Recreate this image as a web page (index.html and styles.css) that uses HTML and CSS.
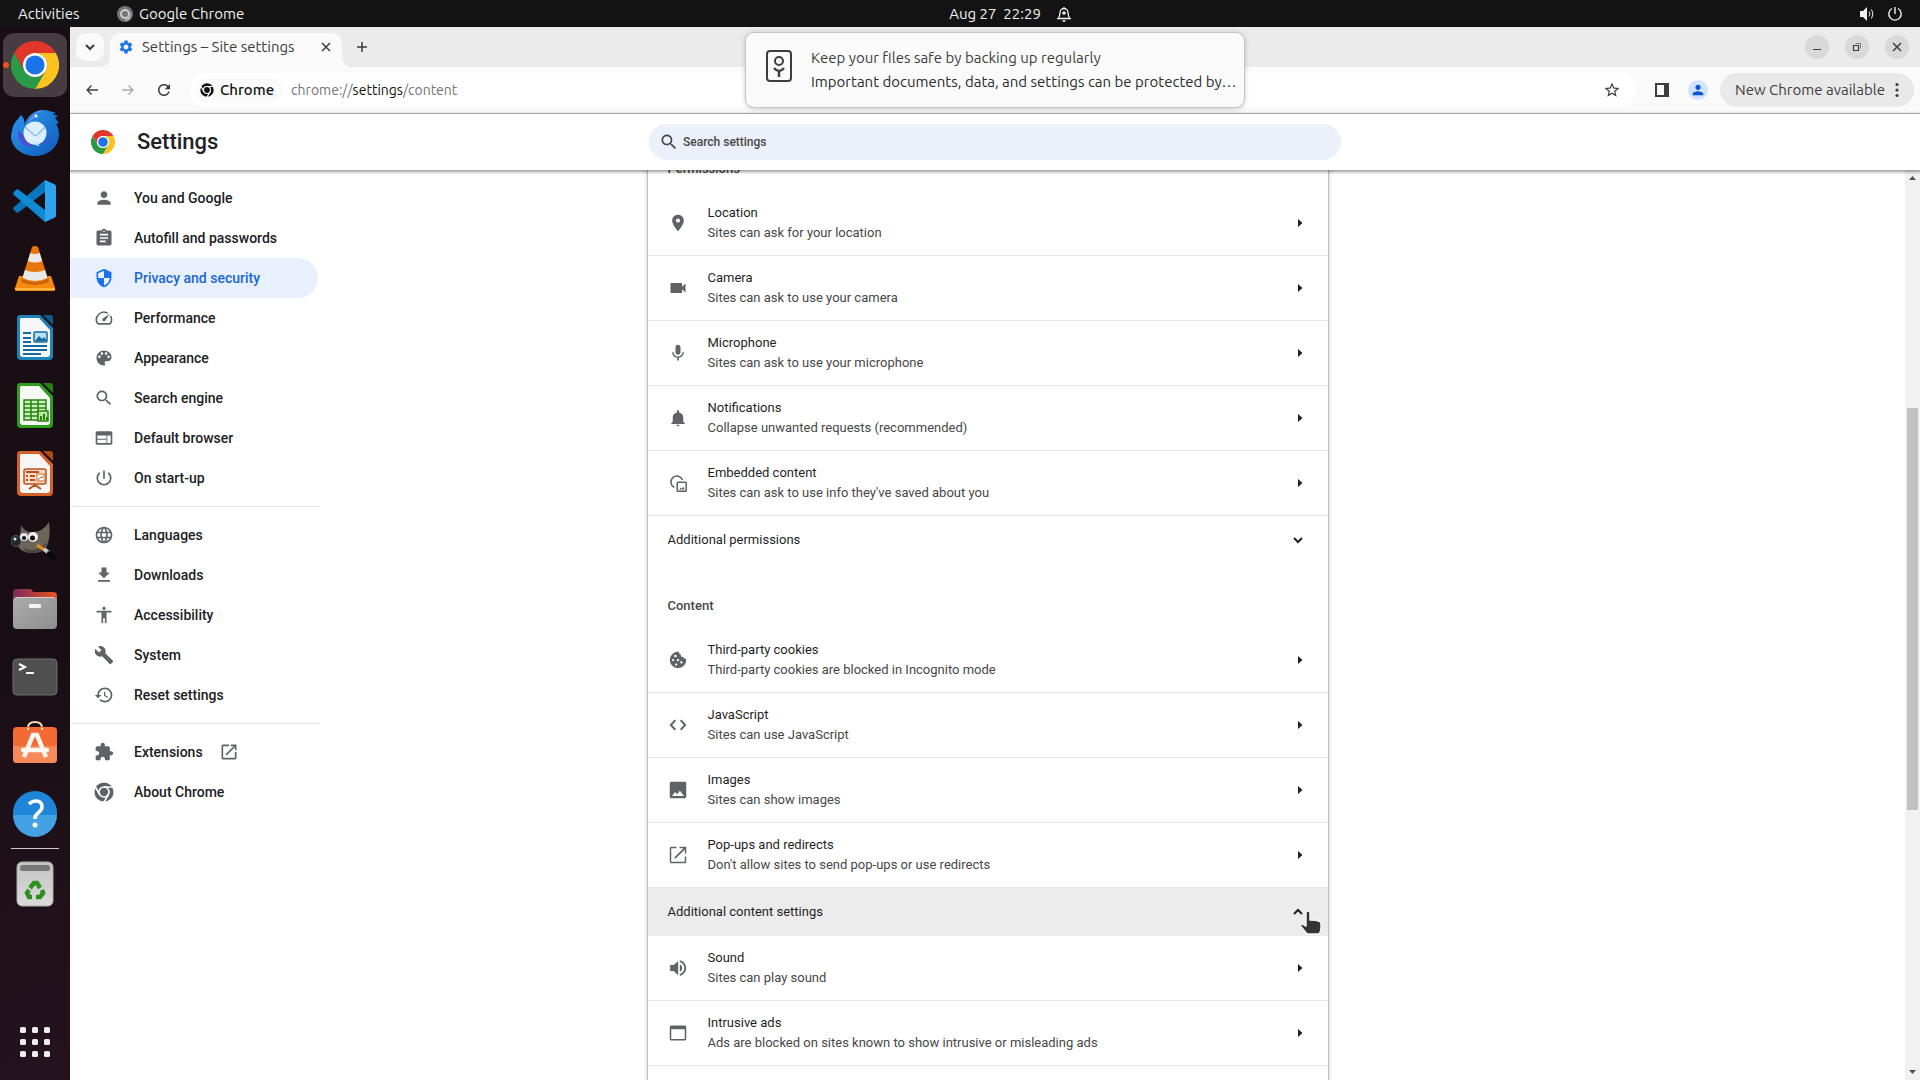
FILE: index.html
```html
<!DOCTYPE html>
<html lang="en-GB">
<head>
<meta charset="utf-8">
<meta name="viewport" content="width=device-width, initial-scale=1">
<title>Settings – Site settings</title>
<link rel="stylesheet" href="styles.css">
</head>
<body>
<svg class="sprite" aria-hidden="true">
  <defs>
    <mask id="chrome-cuts">
      <circle cx="24" cy="24" r="23" fill="#fff"/>
      <g fill="none" stroke="#000" stroke-width="4"><circle cx="24" cy="24" r="12"/><path d="M24 12h24M13.6 30L2 10M34.4 30L23 50"/></g>
    </mask>
    <linearGradient id="g-bird" x1="0" y1="0" x2="1" y2="1"><stop offset="0" stop-color="#2a9bf2"/><stop offset="1" stop-color="#1059b8"/></linearGradient>
    <linearGradient id="g-files" x1="0" y1="0" x2="1" y2="0"><stop offset="0" stop-color="#7b2a5e"/><stop offset="1" stop-color="#e95420"/></linearGradient>
    <linearGradient id="g-grey" x1="0" y1="0" x2="0" y2="1"><stop offset="0" stop-color="#c4c4c4"/><stop offset="1" stop-color="#dadada"/></linearGradient>
    <linearGradient id="g-steel" x1="0" y1="0" x2="1" y2="1"><stop offset="0" stop-color="#acacac"/><stop offset="1" stop-color="#8e8e8e"/></linearGradient>
  </defs>
  <symbol id="chrome" viewBox="0 0 48 48">
    <path fill="#e3362b" d="M3.2 12A24 24 0 0 1 44.8 12H24A12 12 0 0 0 13.6 30z"/>
    <path fill="#fcc31e" d="M44.8 12A24 24 0 0 1 24 48L34.4 30A12 12 0 0 0 24 12z"/>
    <path fill="#2b9a47" d="M3.2 12A24 24 0 0 0 24 48L34.4 30A12 12 0 0 1 13.6 30z"/>
    <circle cx="24" cy="24" r="12" fill="#fff"/><circle cx="24" cy="24" r="9.6" fill="#1a73e8"/>
  </symbol>
  <symbol id="chrome-mono" viewBox="0 0 48 48"><path fill="currentColor" mask="url(#chrome-cuts)" d="M0 0h48v48H0z"/></symbol>
  <symbol id="person" viewBox="0 0 24 24"><path d="M12 12c2.21 0 4-1.79 4-4s-1.79-4-4-4-4 1.79-4 4 1.79 4 4 4zm0 2c-2.67 0-8 1.34-8 4v2h16v-2c0-2.66-5.33-4-8-4z"/></symbol>
  <symbol id="assignment" viewBox="0 0 24 24"><path d="M19 3h-4.18C14.4 1.84 13.3 1 12 1c-1.3 0-2.4.84-2.82 2H5c-1.1 0-2 .9-2 2v14c0 1.1.9 2 2 2h14c1.1 0 2-.9 2-2V5c0-1.1-.9-2-2-2zm-7 0c.55 0 1 .45 1 1s-.45 1-1 1-1-.45-1-1 .45-1 1-1zm2 14H7v-2h7v2zm3-4H7v-2h10v2zm0-4H7V7h10v2z"/></symbol>
  <symbol id="security" viewBox="0 0 24 24"><path d="M12 1L3 5v6c0 5.55 3.84 10.74 9 12 5.16-1.26 9-6.45 9-12V5l-9-4zm0 10.99h7c-.53 4.12-3.28 7.79-7 8.94V12H5V6.3l7-3.11v8.8z"/></symbol>
  <symbol id="speed" viewBox="0 0 24 24"><path d="M20.38 8.57l-1.23 1.85a8 8 0 0 1-.22 7.58H5.07A8 8 0 0 1 15.58 6.85l1.85-1.23A10 10 0 0 0 3.35 19a2 2 0 0 0 1.72 1h13.85a2 2 0 0 0 1.74-1 10 10 0 0 0-.27-10.44zM10.59 15.41a2 2 0 0 0 2.83 0l5.66-8.49-8.49 5.66a2 2 0 0 0 0 2.83z"/></symbol>
  <symbol id="palette" viewBox="0 0 24 24"><path d="M12 3c-4.97 0-9 4.03-9 9s4.03 9 9 9c.83 0 1.5-.67 1.5-1.5 0-.39-.15-.74-.39-1.01-.23-.26-.38-.61-.38-.99 0-.83.67-1.5 1.5-1.5H16c2.76 0 5-2.24 5-5 0-4.42-4.03-8-9-8zm-5.5 9c-.83 0-1.500-.67-1.500-1.500S5.670 9 6.500 9 8 9.670 8 10.500 7.330 12 6.500 12zm3-4C8.670 8 8 7.330 8 6.500S8.670 5 9.500 5s1.500.670 1.500 1.500S10.330 8 9.500 8zm5 0c-.83 0-1.500-.67-1.500-1.500S13.670 5 14.500 5s1.500.670 1.500 1.500S15.330 8 14.500 8zm3 4c-.83 0-1.500-.67-1.500-1.500S16.670 9 17.500 9s1.500.670 1.500 1.500-.67 1.500-1.500 1.500z"/></symbol>
  <symbol id="search" viewBox="0 0 24 24"><path d="M15.5 14h-.79l-.28-.27C15.41 12.59 16 11.11 16 9.5 16 5.91 13.09 3 9.5 3S3 5.91 3 9.5 5.91 16 9.5 16c1.61 0 3.09-.59 4.23-1.57l.27.28v.79l5 4.99L20.49 19l-4.99-5zm-6 0C7.01 14 5 11.99 5 9.5S7.01 5 9.5 5 14 7.01 14 9.5 11.99 14 9.5 14z"/></symbol>
  <symbol id="web" viewBox="0 0 24 24"><path d="M20 4H4c-1.1 0-1.99.9-1.99 2L2 18c0 1.1.9 2 2 2h16c1.100 0 2-.9 2-2V6c0-1.100-.9-2-2-2zm-5 14H4v-4h11v4zm0-5H4V9h11v4zm5 5h-4V9h4v9z"/></symbol>
  <symbol id="power" viewBox="0 0 24 24"><path d="M13 3h-2v10h2V3zm4.83 2.17l-1.42 1.42C17.99 7.86 19 9.81 19 12c0 3.87-3.13 7-7 7s-7-3.13-7-7c0-2.19 1.01-4.14 2.58-5.42L6.17 5.17C4.23 6.82 3 9.26 3 12c0 4.97 4.03 9 9 9s9-4.03 9-9c0-2.74-1.23-5.18-3.17-6.83z"/></symbol>
  <symbol id="globe" viewBox="0 0 24 24"><path d="M11.99 2C6.47 2 2 6.48 2 12s4.47 10 9.99 10C17.52 22 22 17.52 22 12S17.52 2 11.99 2zm6.93 6h-2.95c-.32-1.25-.78-2.45-1.38-3.56 1.84.63 3.37 1.91 4.33 3.56zM12 4.04c.83 1.2 1.48 2.53 1.91 3.96h-3.82c.43-1.43 1.08-2.76 1.91-3.96zM4.26 14C4.1 13.36 4 12.69 4 12s.1-1.36.26-2h3.38c-.08.66-.14 1.32-.14 2 0 .68.06 1.34.14 2H4.26zm.82 2h2.95c.32 1.25.78 2.45 1.38 3.56-1.84-.63-3.37-1.9-4.33-3.56zm2.95-8H5.08c.96-1.66 2.49-2.93 4.33-3.56C8.81 5.55 8.35 6.75 8.03 8zM12 19.96c-.83-1.2-1.48-2.53-1.91-3.96h3.82c-.43 1.43-1.08 2.76-1.91 3.96zM14.34 14H9.66c-.09-.66-.16-1.32-.16-2 0-.68.07-1.35.16-2h4.68c.09.65.16 1.32.16 2 0 .68-.07 1.34-.16 2zm.25 5.56c.6-1.11 1.06-2.31 1.38-3.56h2.95c-.96 1.65-2.49 2.93-4.33 3.56zM16.36 14c.08-.66.14-1.32.14-2 0-.68-.06-1.34-.14-2h3.38c.16.64.26 1.31.26 2s-.1 1.36-.26 2h-3.38z"/></symbol>
  <symbol id="download" viewBox="0 0 24 24"><path d="M19 9h-4V3H9v6H5l7 7 7-7zM5 18v2h14v-2H5z"/></symbol>
  <symbol id="accessibility" viewBox="0 0 24 24"><path d="M12 2c1.1 0 2 .9 2 2s-.9 2-2 2-2-.9-2-2 .9-2 2-2zm9 7h-6v13h-2v-6h-2v6H9V9H3V7h18v2z"/></symbol>
  <symbol id="wrench" viewBox="0 0 24 24"><path d="M22.7 19l-9.1-9.1c.9-2.3.4-5-1.5-6.9-2-2-5-2.4-7.4-1.3L9 6 6 9 1.6 4.7C.4 7.1.9 10.1 2.9 12.1c1.9 1.9 4.6 2.4 6.9 1.5l9.1 9.1c.4.4 1 .4 1.4 0l2.3-2.3c.5-.4.5-1.1.1-1.4z"/></symbol>
  <symbol id="restore" viewBox="0 0 24 24"><path d="M13 3c-4.97 0-9 4.03-9 9H1l3.89 3.89.07.14L9 12H6c0-3.87 3.13-7 7-7s7 3.13 7 7-3.13 7-7 7c-1.93 0-3.68-.79-4.94-2.06l-1.42 1.42C8.27 19.99 10.51 21 13 21c4.97 0 9-4.03 9-9s-4.03-9-9-9zm-1 5v5l4.28 2.54.72-1.21-3.5-2.08V8H12z"/></symbol>
  <symbol id="extension" viewBox="0 0 24 24"><path d="M20.5 11H19V7c0-1.1-.9-2-2-2h-4V3.5C13 2.12 11.88 1 10.5 1S8 2.12 8 3.5V5H4c-1.1 0-1.99.9-1.99 2v3.8H3.5c1.49 0 2.7 1.21 2.7 2.7s-1.21 2.7-2.7 2.7H2V20c0 1.1.9 2 2 2h3.8v-1.5c0-1.49 1.21-2.7 2.7-2.7 1.49 0 2.7 1.21 2.7 2.7V22H17c1.1 0 2-.9 2-2v-4h1.5c1.38 0 2.5-1.12 2.5-2.5S21.88 11 20.5 11z"/></symbol>
  <symbol id="launch" viewBox="0 0 24 24"><path d="M19 19H5V5h7V3H5c-1.11 0-2 .9-2 2v14c0 1.1.89 2 2 2h14c1.1 0 2-.9 2-2v-7h-2v7zM14 3v2h3.59l-9.83 9.83 1.41 1.41L19 6.41V10h2V3h-7z"/></symbol>
  <symbol id="place" viewBox="0 0 24 24"><path d="M12 2C8.13 2 5 5.13 5 9c0 5.25 7 13 7 13s7-7.75 7-13c0-3.87-3.13-7-7-7zm0 9.5c-1.38 0-2.5-1.12-2.5-2.5s1.12-2.5 2.5-2.5 2.5 1.12 2.5 2.5-1.12 2.5-2.5 2.5z"/></symbol>
  <symbol id="videocam" viewBox="0 0 24 24"><path d="M17 10.5V7c0-.55-.45-1-1-1H4c-.55 0-1 .45-1 1v10c0 .55.45 1 1 1h12c.55 0 1-.45 1-1v-3.5l4 4v-11l-4 4z"/></symbol>
  <symbol id="mic" viewBox="0 0 24 24"><path d="M12 14c1.66 0 2.99-1.34 2.99-3L15 5c0-1.66-1.34-3-3-3S9 3.34 9 5v6c0 1.66 1.34 3 3 3zm5.3-3c0 3-2.54 5.1-5.3 5.1S6.7 14 6.7 11H5c0 3.41 2.72 6.23 6 6.72V21h2v-3.28c3.28-.48 6-3.3 6-6.72h-1.7z"/></symbol>
  <symbol id="bell" viewBox="0 0 24 24"><path d="M12 23c1.100 0 2-.9 2-2h-4c0 1.100.890 2 2 2zm7-6v-6c0-3.070-2.140-5.640-5.500-6.320V3c0-.83-.67-1.500-1.500-1.500s-1.500.670-1.500 1.500v1.680C7.130 5.360 5 7.920 5 11v6l-2 2v1h18v-1l-2-2z"/></symbol>
  <symbol id="embedded" viewBox="0 0 24 24"><g fill="none" stroke="currentColor" stroke-width="2"><path d="M7 18A8 8 0 1 1 18 8"/><rect x="11" y="11" width="12" height="12" rx="1"/></g><path d="M13.500 20.500l2-2.500 1.500 1.500 2-2.500 2 3.500z"/></symbol>
  <symbol id="cookie" viewBox="0 0 24 24"><path fill-rule="evenodd" d="M12 1A11 11 0 1 0 23 12c0-.8-.1-1.300-.2-1.800-1.500.3-3.500-.5-3.800-2.200-2.500 0-3.800-1.800-3.300-3.500-1.700-.2-2.700-1.800-2.500-3.500zM8.500 5a1.700 1.700 0 1 1 0 3.400 1.700 1.700 0 0 1 0-3.400zM5.500 10.500a1.500 1.500 0 1 1 0 3 1.500 1.500 0 0 1 0-3zM12 10.500a1.600 1.600 0 1 1 0 3.200 1.600 1.600 0 0 1 0-3.200zM9.500 16.500a1.500 1.500 0 1 1 0 3 1.500 1.500 0 0 1 0-3zM16.500 13.500a1.600 1.600 0 1 1 0 3.200 1.600 1.600 0 0 1 0-3.200z"/></symbol>
  <symbol id="code" viewBox="0 0 24 24"><path fill="none" stroke="currentColor" stroke-width="2.600" d="M8.500 5.500L2.500 12l6 6.500M15.500 5.500l6 6.500-6 6.500"/></symbol>
  <symbol id="image" viewBox="0 0 24 24"><path d="M23 21V3c0-1.100-.9-2-2-2H3C1.900 1 1 1.900 1 3v18c0 1.100.9 2 2 2h18c1.100 0 2-.9 2-2zM8 14.500l3 3 3.500-4.500 5.500 7H4z"/></symbol>
  <symbol id="volume" viewBox="0 0 24 24"><path d="M1.500 8v8h4.800l6 5.500v-19L6.300 8H1.500zm16 4c0-2.100-1-3.900-3-4.800v9.600c2-.9 3-2.700 3-4.800zM14.500 1.500V4c3.400 1 6 4.200 6 8s-2.600 7-6 8v2.500c4.800-1.100 8.400-5.400 8.400-10.500S19.300 2.600 14.500 1.500z"/></symbol>
  <symbol id="window" viewBox="0 0 24 24"><path fill-rule="evenodd" d="M3 2h18a2 2 0 0 1 2 2v16a2 2 0 0 1-2 2H3a2 2 0 0 1-2-2V4a2 2 0 0 1 2-2zm0 5v13h18V7z"/></symbol>
  <symbol id="launch-row" viewBox="0 0 24 24"><path d="M21 21H3V3h7V1H3C1.900 1 1 1.900 1 3v18c0 1.100.9 2 2 2h18c1.100 0 2-.9 2-2v-7h-2v7zM14 1v2h5.300L7 15.300 8.700 17 21 4.700V10h2V1h-9z"/></symbol>
  <symbol id="gear" viewBox="0 0 24 24"><path d="M19.14 12.94c.04-.3.06-.61.06-.94 0-.32-.02-.64-.07-.94l2.03-1.58c.18-.14.23-.41.12-.61l-1.92-3.32c-.12-.22-.37-.29-.59-.22l-2.39.96c-.5-.38-1.03-.7-1.62-.94l-.36-2.54c-.04-.24-.24-.41-.48-.41h-3.84c-.24 0-.43.17-.47.41l-.36 2.54c-.59.24-1.13.57-1.62.94l-2.39-.96c-.22-.08-.47 0-.59.22L2.74 8.87c-.12.21-.08.47.12.61l2.03 1.58c-.05.3-.09.63-.09.94s.02.64.07.94l-2.03 1.58c-.18.14-.23.41-.12.61l1.92 3.32c.12.22.37.29.59.22l2.39-.96c.5.38 1.03.7 1.62.94l.36 2.54c.05.24.24.41.48.41h3.84c.24 0 .44-.17.47-.41l.36-2.54c.59-.24 1.13-.56 1.62-.94l2.39.96c.22.08.47 0 .59-.22l1.92-3.32c.12-.22.07-.47-.12-.61l-2.01-1.58zM12 15.6c-1.98 0-3.6-1.62-3.6-3.6s1.62-3.6 3.6-3.6 3.6 1.62 3.6 3.6-1.62 3.6-3.6 3.6z"/></symbol>
  <symbol id="star" viewBox="0 0 24 24"><path d="M22 9.24l-7.19-.62L12 2 9.19 8.63 2 9.24l5.46 4.73L5.82 21 12 17.27 18.18 21l-1.63-7.03L22 9.24zM12 15.4l-3.76 2.27 1-4.28-3.32-2.88 4.38-.38L12 6.1l1.71 4.04 4.38.38-3.32 2.88 1 4.28L12 15.4z"/></symbol>
  <symbol id="back" viewBox="0 0 24 24"><path d="M22 10.800H6.500l5.500-5.500L10.300 3.600 2 12l8.300 8.400 1.700-1.700-5.500-5.500H22z"/></symbol>
  <symbol id="forward" viewBox="0 0 24 24"><path d="M2 10.800h15.500L12 5.300l1.700-1.700L22 12l-8.300 8.400-1.700-1.700 5.500-5.500H2z"/></symbol>
  <symbol id="reload" viewBox="0 0 24 24"><path d="M17.65 6.35C16.2 4.9 14.21 4 12 4c-4.42 0-7.99 3.58-7.99 8s3.57 8 7.99 8c3.73 0 6.84-2.55 7.73-6h-2.08c-.82 2.33-3.04 4-5.65 4-3.31 0-6-2.69-6-6s2.69-6 6-6c1.66 0 3.14.69 4.22 1.780L13 11h7V4l-2.350 2.350z"/></symbol>
  <symbol id="cross" viewBox="0 0 12 12"><path fill="none" stroke="currentColor" stroke-width="1.500" d="M2 2l8 8M10 2l-8 8"/></symbol>
  <symbol id="chev-down" viewBox="0 0 20 20"><path fill="none" stroke="currentColor" stroke-width="2" d="M6 8l4 4 4-4"/></symbol>
  <symbol id="chev-up" viewBox="0 0 20 20"><path fill="none" stroke="currentColor" stroke-width="2" d="M6 12l4-4 4 4"/></symbol>
  <symbol id="caret" viewBox="0 0 16 16"><path d="M6 4l4.500 4L6 12z"/></symbol>
</svg>

<header class="topbar">
  <button class="topbar-activities">Activities</button>
  <button class="topbar-app"><svg class="i16" aria-hidden="true"><circle cx="8" cy="8" r="8" fill="#757575"/><circle cx="8" cy="8" r="5" fill="#cfcfcf"/><path d="M10 11.500l-2 4.300 5-3 1-6z" fill="#b5b5b5"/><circle cx="8" cy="8" r="3" fill="#757575"/></svg>Google Chrome</button>
  <button class="topbar-clock"><span>Aug 27&nbsp; 22:29</span><svg class="i16" viewBox="0 0 16 16" fill="none" stroke="#f2f2f2" stroke-width="1.300" aria-hidden="true"><path d="M2 12.500c1.500-1.500 2-2.500 2-6a4 4 0 0 1 8 0c0 3.500.5 4.500 2 6zM8 2.500V1M6.500 15h3"/><path d="M8 5v4M6 7h4"/></svg></button>
  <button class="topbar-system" aria-label="System menu">
    <svg class="i16" viewBox="0 0 16 16" aria-hidden="true"><path fill="#f2f2f2" d="M1 5h3l4-4v14l-4-4H1z"/><path fill="none" stroke="#f2f2f2" d="M10 5.500q2 2.500 0 5M12.500 3.500q3 4.500 0 9"/></svg>
    <svg class="i16" viewBox="0 0 16 16" fill="none" stroke="#f2f2f2" stroke-width="1.400" aria-hidden="true"><path d="M8 1v7M5 2.500a6.200 6.200 0 1 0 6 0"/></svg>
  </button>
</header>

<div class="desktop">
  <nav class="dock" aria-label="Dock">
    <a href="#" class="dock-item dock-active" aria-label="Google Chrome"><svg><use href="#chrome"/></svg></a>
    <a href="#" class="dock-item" aria-label="Thunderbird"><svg viewBox="0 0 48 48">
      <path fill="url(#g-bird)" d="M1 22C2 14 6 12 10 6c4 4 4 8 3 11C16 8 22 1 32 1c5 0 9 2 13 3-2 1-3 1-4 1l6 2-3 2 4 5-3 1c2 3 3 6 3 10 0 13-11 22-24 22S0 38 0 27l1-5z"/>
      <path fill="#2486e6" d="M2 20C5 17 8 13 10 7c3 5 3 8 1 13-3 6-1 12 5 17C6 35 1 28 2 20z"/>
      <path fill="#9a86ea" d="M16 14l6-7c4-5 7-6 9-5-5 1-8 4-9 8z"/>
      <circle cx="25" cy="7" r="1.600" fill="#e8f6ff"/>
      <path fill="#4c4fd0" d="M8 21c-3 8 1 15 10 17l6-3-9-5zM37 28c0 4-4 6-8 6 3 1 7 1 9-2z"/>
      <circle cx="24" cy="24" r="11.500" fill="#dceffc"/><path d="M20 33q5 4 9 4-3-2-2-5z" fill="#cfe9fb"/>
      <path fill="none" stroke="#8fbbe6" stroke-width="1.500" d="M14 18l9 8q1.500 1 3 0l8-8"/></svg></a>
    <a href="#" class="dock-item" aria-label="Visual Studio Code"><svg viewBox="0 0 48 48">
      <path fill="#0a75bb" d="M3 30l31-27v12L8 35c-1 1-2 1-3 0l-2-2c-1-1-1-2 0-3z"/>
      <path fill="#0f8ad4" d="M3 18l31 27V33L8 13c-1-1-2-1-3 0l-2 2c-1 1-1 2 0 3z"/>
      <path fill="#2fa2f0" d="M34 3l9 4c1.500 1 2 1 2 3v28c0 2-.5 2-2 3l-9 4z"/></svg></a>
    <a href="#" class="dock-item" aria-label="VLC"><svg viewBox="0 0 48 48">
      <path fill="#f58a0e" d="M8 31h32l4 12q1 3-2 3H6q-3 0-2-3z"/><path fill="#c9600a" d="M10 37q14 6 28 0l-1-6H11z"/><path fill="#ffb545" d="M4 43h40v2H4z"/>
      <path fill="#e8760a" d="M21 2q3-2 6 0l10 32q-13 7-26 0z"/>
      <path fill="#e8e8e8" d="M19.300 8q4.700 2 9.400 0l2.500 8q-7.200 3-14.400 0zM14 25q10 4 20 0l2.500 8q-12.500 6-25 0z"/></svg></a>
    <a href="#" class="dock-item" aria-label="LibreOffice Writer"><svg viewBox="0 0 48 48">
      <path fill="#1d83b8" d="M9 2h20l13 13v28q0 4-4 4H10q-4 0-4-4V6q0-4 3-4z"/><path fill="#f5f7f8" d="M10 5h18l11 12v24q0 3-3 3H12q-3 0-3-3V6z"/><path fill="#0e5c88" d="M32 2h7q3 0 3 3v7z"/>
      <path stroke="#13699b" stroke-width="2" d="M12 20h8M12 25h8M12 29h8M12 33h24M12 37h24M12 41h18"/><rect x="23" y="19" width="13" height="10" rx="1" fill="#b7e1f5" stroke="#13699b" stroke-width="1.500"/><path fill="#13699b" d="M24 28l4-5 3 3 2-2 3 4z"/></svg></a>
    <a href="#" class="dock-item" aria-label="LibreOffice Calc"><svg viewBox="0 0 48 48">
      <path fill="#2e9e1b" d="M9 2h20l13 13v28q0 4-4 4H10q-4 0-4-4V6q0-4 3-4z"/><path fill="#f6f8f5" d="M10 5h18l11 12v24q0 3-3 3H12q-3 0-3-3V6z"/><path fill="#28810f" d="M32 2h7q3 0 3 3v7z"/>
      <path fill="#c9f0b8" stroke="#28810f" stroke-width="1.500" d="M13 19h22v20H13zM13 23h22M13 27h22M13 31h22M13 35h22M20 19v20M27 19v20"/><rect x="27" y="30" width="10" height="10" fill="#b6e89f" stroke="#28810f" stroke-width="1.500"/><path stroke="#28810f" stroke-width="2" d="M30 39v-4M33 39v-6M36 39v-3"/></svg></a>
    <a href="#" class="dock-item" aria-label="LibreOffice Impress"><svg viewBox="0 0 48 48">
      <path fill="#d4602a" d="M9 2h20l13 13v28q0 4-4 4H10q-4 0-4-4V6q0-4 3-4z"/><path fill="#f8f6f4" d="M10 5h18l11 12v24q0 3-3 3H12q-3 0-3-3V6z"/><path fill="#b34812" d="M32 2h7q3 0 3 3v7z"/>
      <rect x="13" y="20" width="22" height="15" rx="2" fill="#f8dcc8" stroke="#b9501b" stroke-width="1.500"/><path fill="none" stroke="#b9501b" stroke-width="2" d="M15 23h13M15 27h2M15 31h2M19 27h5M19 31h5M24 35v3M18 40l6-4 6 4"/><rect x="26" y="25" width="8" height="7" fill="#fff" stroke="#d4602a"/><path fill="none" stroke="#d4602a" d="M27 31l3-3 1 1 2-3"/></svg></a>
    <a href="#" class="dock-item" aria-label="GIMP"><svg viewBox="0 0 48 48">
      <path fill="#6b6559" d="M10 8q4 8 12 7 10 0 16-10 2 14-2 24-4 7-14 7-14 0-16-10 4-8 4-18z"/><path fill="#4a463e" d="M12 31q14 6 24-6-2 11-14 11-8 0-10-5z"/>
      <ellipse cx="5" cy="24" rx="5" ry="5.500" fill="#20262a" stroke="#4d5a63"/><circle cx="4" cy="22" r="1.500" fill="#dfe8ee"/>
      <circle cx="13" cy="20" r="4" fill="#e6e6e6"/><circle cx="22" cy="20" r="5" fill="#f0f0f0"/><circle cx="13" cy="21" r="2" fill="#111"/><circle cx="21.500" cy="21" r="2.500" fill="#111"/>
      <path d="M26 28l9 6" stroke="#f08a1d" stroke-width="3"/><path d="M33 32l5 4" stroke="#c8ccd0" stroke-width="4"/><path fill="#090909" d="M37 34q6 0 10 10-9-1-12-6z"/></svg></a>
    <a href="#" class="dock-item" aria-label="Files"><svg viewBox="0 0 48 48">
      <path fill="url(#g-files)" d="M2 8q0-4 4-4h12q3 0 4 3h20q4 0 4 4v12H2z"/><rect x="2" y="12" width="44" height="32" rx="4" fill="url(#g-steel)"/><path d="M5 12.500h38" stroke="#d0d0d0"/><rect x="18" y="19" width="12" height="4" rx="1" fill="#f2f2f2"/></svg></a>
    <a href="#" class="dock-item" aria-label="Terminal"><svg viewBox="0 0 48 48">
      <rect x="2" y="6" width="44" height="36" rx="4" fill="#4f4f4f" stroke="#6e6e6e"/><path fill="none" stroke="#fff" stroke-width="2" d="M8 11l6 3-6 3M15 20h8"/></svg></a>
    <a href="#" class="dock-item" aria-label="Ubuntu Software"><svg viewBox="0 0 48 48">
      <path fill="none" stroke="#f9dcae" stroke-width="2" d="M17 10V7q0-6 7-6t7 6v3"/><rect x="2" y="6" width="44" height="36" rx="4" fill="#f26b35"/><path fill="#f78a5a" d="M2 25h44v13q0 4-4 4H6q-4 0-4-4z"/>
      <path fill="none" stroke="#f9dcae" stroke-width="2" d="M17 9V7M31 9V7"/><path fill="none" stroke="#fff6ef" stroke-width="4.500" d="M13 36l9-22h4l9 22"/><path stroke="#fff6ef" stroke-width="4.500" stroke-linecap="round" d="M12 29h24"/></svg></a>
    <a href="#" class="dock-item" aria-label="Help"><svg viewBox="0 0 48 48">
      <circle cx="24" cy="24" r="22" fill="#1f85d8"/><path fill="#43a1e4" d="M2 26h44a22 22 0 0 1-44 0z"/><path fill="none" stroke="#fff" stroke-width="3.500" d="M18 15q3-3 7-3 6 0 6 6 0 3-4 6-3 2-3 6"/><circle cx="24" cy="36" r="2.500" fill="#fff"/></svg></a>
    <hr class="dock-rule">
    <a href="#" class="dock-item" aria-label="Rubbish bin"><svg viewBox="0 0 48 48">
      <rect x="6" y="2" width="36" height="44" rx="5" fill="url(#g-grey)" stroke="#aaa"/><rect x="9" y="5" width="30" height="6" rx="2.500" fill="#777"/>
      <g fill="none" stroke="#2d8f1e" stroke-width="4.500"><path d="M19 28l4-5h3l3 5"/><path d="M31 30l1 3-3 4h-4"/><path d="M21 37h-3l-2-4 2-3"/></g></svg></a>
    <a href="#" class="dock-item dock-apps" aria-label="Show applications"><svg viewBox="0 0 48 48" fill="#eee">
      <g id="dots"><rect x="9" y="9" width="6" height="6" rx="1.500"/><rect x="21" y="9" width="6" height="6" rx="1.500"/><rect x="33" y="9" width="6" height="6" rx="1.500"/></g><use href="#dots" y="12"/><use href="#dots" y="24"/></svg></a>
  </nav>

  <div class="browser">
    <div class="tabstrip">
      <button class="tab-search" aria-label="Search tabs"><svg class="i20"><use href="#chev-down"/></svg></button>
      <div class="tab">
        <svg class="i16 tab-icon"><use href="#gear"/></svg>
        <span class="tab-title">Settings – Site settings</span>
        <button class="tab-close" aria-label="Close tab"><svg class="i12"><use href="#cross"/></svg></button>
      </div>
      <button class="tab-new" aria-label="New tab"><svg viewBox="0 0 12 12" class="i12"><path d="M6 1v10M1 6h10" stroke="currentColor" stroke-width="1.500"/></svg></button>
      <div class="win-controls">
        <button aria-label="Minimise"><svg class="i12" viewBox="0 0 12 12"><path d="M2 8.500h8" stroke="currentColor"/></svg></button>
        <button aria-label="Restore"><svg class="i12" viewBox="0 0 12 12" fill="none" stroke="currentColor"><path stroke-width="1.200" d="M2.500 4.500h5v5h-5z"/><path opacity=".6" d="M4.500 2.500h5v5"/></svg></button>
        <button aria-label="Close"><svg class="i12" viewBox="0 0 12 12"><path d="M2 2l8 8M10 2l-8 8" stroke="currentColor" stroke-width="1.500"/></svg></button>
      </div>
    </div>

    <div class="toolbar">
      <button class="tool" aria-label="Back"><svg class="i14"><use href="#back"/></svg></button>
      <button class="tool" aria-label="Forward" disabled><svg class="i14"><use href="#forward"/></svg></button>
      <button class="tool" aria-label="Reload"><svg class="i18"><use href="#reload"/></svg></button>
      <div class="omnibox">
        <span class="chip"><svg class="i14"><use href="#chrome-mono"/></svg>Chrome</span>
        <span class="url">chrome://<b>settings</b>/content</span>
        <button class="tool star" aria-label="Bookmark this tab"><svg class="i18"><use href="#star"/></svg></button>
      </div>
      <button class="tool" aria-label="Side panel"><svg class="i16" viewBox="0 0 16 16"><path fill="none" stroke="currentColor" stroke-width="2" d="M2 2h12v12H2z"/><path d="M10 2h4v12h-4z"/></svg></button>
      <button class="tool avatar" aria-label="Profile"><svg class="i18"><use href="#person"/></svg></button>
      <button class="update">New Chrome available<svg class="i16" viewBox="0 0 16 16"><circle cx="8" cy="2.500" r="1.600"/><circle cx="8" cy="8" r="1.600"/><circle cx="8" cy="13.500" r="1.600"/></svg></button>
    </div>

    <header class="page-head">
      <div class="brand"><svg class="i24"><use href="#chrome"/></svg><h1>Settings</h1></div>
      <label class="search"><svg class="i20"><use href="#search"/></svg><input type="text" placeholder="Search settings" aria-label="Search settings"></label>
    </header>

    <div class="page">
      <div class="columns">
        <nav class="menu" aria-label="Settings">
          <a href="#"><svg class="i20"><use href="#person"/></svg>You and Google</a>
          <a href="#"><svg class="i20"><use href="#assignment"/></svg>Autofill and passwords</a>
          <a href="#" class="current" aria-current="page"><svg class="i20"><use href="#security"/></svg>Privacy and security</a>
          <a href="#"><svg class="i20"><use href="#speed"/></svg>Performance</a>
          <a href="#"><svg class="i20"><use href="#palette"/></svg>Appearance</a>
          <a href="#"><svg class="i20"><use href="#search"/></svg>Search engine</a>
          <a href="#"><svg class="i20"><use href="#web"/></svg>Default browser</a>
          <a href="#"><svg class="i20"><use href="#power"/></svg>On start-up</a>
          <hr>
          <a href="#"><svg class="i20"><use href="#globe"/></svg>Languages</a>
          <a href="#"><svg class="i20"><use href="#download"/></svg>Downloads</a>
          <a href="#"><svg class="i20"><use href="#accessibility"/></svg>Accessibility</a>
          <a href="#"><svg class="i20"><use href="#wrench"/></svg>System</a>
          <a href="#"><svg class="i20"><use href="#restore"/></svg>Reset settings</a>
          <hr>
          <a href="#"><svg class="i20"><use href="#extension"/></svg>Extensions<svg class="i20 menu-out"><use href="#launch"/></svg></a>
          <a href="#"><svg class="i20"><use href="#chrome-mono"/></svg>About Chrome</a>
        </nav>

        <main class="card">
          <h2>Permissions</h2>
          <a href="#" class="row"><svg class="i20"><use href="#place"/></svg><span class="row-text">Location<small>Sites can ask for your location</small></span><svg class="i16 go"><use href="#caret"/></svg></a>
          <a href="#" class="row"><svg class="i20"><use href="#videocam"/></svg><span class="row-text">Camera<small>Sites can ask to use your camera</small></span><svg class="i16 go"><use href="#caret"/></svg></a>
          <a href="#" class="row"><svg class="i20"><use href="#mic"/></svg><span class="row-text">Microphone<small>Sites can ask to use your microphone</small></span><svg class="i16 go"><use href="#caret"/></svg></a>
          <a href="#" class="row"><svg class="i18"><use href="#bell"/></svg><span class="row-text">Notifications<small>Collapse unwanted requests (recommended)</small></span><svg class="i16 go"><use href="#caret"/></svg></a>
          <a href="#" class="row"><svg class="i18"><use href="#embedded"/></svg><span class="row-text">Embedded content<small>Sites can ask to use info they've saved about you</small></span><svg class="i16 go"><use href="#caret"/></svg></a>
          <button class="expander">Additional permissions<svg class="i20"><use href="#chev-down"/></svg></button>
          <h2>Content</h2>
          <a href="#" class="row"><svg class="i18"><use href="#cookie"/></svg><span class="row-text">Third-party cookies<small>Third-party cookies are blocked in Incognito mode</small></span><svg class="i16 go"><use href="#caret"/></svg></a>
          <a href="#" class="row"><svg class="i18"><use href="#code"/></svg><span class="row-text">JavaScript<small>Sites can use JavaScript</small></span><svg class="i16 go"><use href="#caret"/></svg></a>
          <a href="#" class="row"><svg class="i18"><use href="#image"/></svg><span class="row-text">Images<small>Sites can show images</small></span><svg class="i16 go"><use href="#caret"/></svg></a>
          <a href="#" class="row"><svg class="i18"><use href="#launch-row"/></svg><span class="row-text">Pop-ups and redirects<small>Don't allow sites to send pop-ups or use redirects</small></span><svg class="i16 go"><use href="#caret"/></svg></a>
          <button class="expander hovered">Additional content settings<svg class="i20"><use href="#chev-up"/></svg>
            <svg class="pointer" viewBox="0 0 24 26" aria-hidden="true"><path fill="#333" stroke="#f4f4f4" stroke-width="1.500" stroke-linejoin="round" d="M7 3q0-2 2-2t2 2v7q6 0 8 1 3 0 3 3v4q0 4-2 6H8L1.500 16q0-2.500 3-1.500L7 16z"/></svg>
          </button>
          <a href="#" class="row"><svg class="i18"><use href="#volume"/></svg><span class="row-text">Sound<small>Sites can play sound</small></span><svg class="i16 go"><use href="#caret"/></svg></a>
          <a href="#" class="row"><svg class="i18"><use href="#window"/></svg><span class="row-text">Intrusive ads<small>Ads are blocked on sites known to show intrusive or misleading ads</small></span><svg class="i16 go"><use href="#caret"/></svg></a>
          <a href="#" class="row" aria-label="More"></a>
        </main>
      </div>
      <div class="scrollbar" aria-hidden="true">
        <svg viewBox="0 0 15 15"><path d="M4 10l3.500-4L11 10z"/></svg>
        <div class="scroll-track"><div class="scroll-thumb"></div></div>
        <svg viewBox="0 0 15 15"><path d="M4 5l3.500 4L11 5z"/></svg>
      </div>
    </div>

    <aside class="toast">
      <svg viewBox="0 0 28 34" fill="none" stroke="#3d3d3d" stroke-width="2"><rect x="2" y="2" width="24" height="30" rx="3"/><circle cx="14" cy="12" r="4"/><path stroke-width="2.500" d="M9 19q5 6 10 0M14 22v6"/></svg>
      <div><p class="toast-title">Keep your files safe by backing up regularly</p><p>Important documents, data, and settings can be protected by…</p></div>
    </aside>
  </div>
</div>
</body>
</html>
```

FILE: styles.css
```css
:root {
  --ui: Ubuntu, "Noto Sans", sans-serif;
  --page: Roboto, sans-serif;
  --ink: #1f1f1f;
  --muted: #474747;
  --icon: #5f6368;
  --line: #e8e8e8;
  --chrome-bg: #fafafa;
}

* { box-sizing: border-box; }
body {
  margin: 0;
  height: 100vh;
  display: flex;
  flex-direction: column;
  overflow: hidden;
  font-family: var(--page);
  background: #1b1017;
}
button {
  border: 0;
  padding: 0;
  margin: 0;
  background: none;
  font: inherit;
  color: inherit;
  display: flex;
  align-items: center;
}
a { color: inherit; text-decoration: none; }
h1, h2, p { margin: 0; }
svg { display: block; flex: none; }
svg:not([fill]) { fill: currentColor; }
.sprite { position: absolute; width: 0; height: 0; }
.i12 { width: 12px; height: 12px; }
.i14 { width: 14px; height: 14px; }
.i16 { width: 16px; height: 16px; }
.i18 { width: 18px; height: 18px; }
.i20 { width: 20px; height: 20px; }
.i24 { width: 24px; height: 24px; }

/* GNOME top bar */
.topbar {
  flex: none;
  height: 27px;
  display: grid;
  grid-template-columns: 70px 1fr auto 1fr;
  align-items: center;
  background: #131313;
  color: #f2f2f2;
  font: 15px/20px var(--ui);
  white-space: nowrap;
}
.topbar-activities { padding-left: 18px; }
.topbar-app { padding-left: 47px; gap: 6px; }
.topbar-clock { padding-left: 31px; gap: 15px; }
.topbar-system { justify-self: end; gap: 12px; padding-right: 17px; }

.desktop { flex: 1; min-height: 0; display: flex; }

/* Dock */
.dock {
  flex: none;
  width: 70px;
  padding: 4px 3px;
  display: flex;
  flex-direction: column;
  background: linear-gradient(160deg, #1a0e15 60%, #24131f);
}
.dock-item {
  height: 68px;
  border: solid transparent;
  border-width: 2px 0;
  background-clip: padding-box;
  border-radius: 12px;
  display: flex;
  align-items: center;
  justify-content: center;
  position: relative;
}
.dock-item svg { width: 48px; height: 48px; }
.dock-active { background-color: #463c42; }
.dock-active::before {
  content: "";
  position: absolute;
  left: 0;
  width: 6px;
  height: 6px;
  border-radius: 3px;
  background: #e95420;
}
.dock-rule { width: 48px; height: 1px; margin: 1px auto; border: 0; background: #cfcbcd; }
.dock-apps { margin-top: auto; }

/* Browser window */
.browser {
  flex: 1;
  min-width: 0;
  display: flex;
  flex-direction: column;
  position: relative;
  background: #fff;
}
.tabstrip {
  flex: none;
  height: 40px;
  padding: 6px 11px 0 6px;
  display: flex;
  align-items: flex-start;
  background: #ebebeb;
  color: #3d3d3d;
  font: 15px/20px var(--ui);
}
.tab-search {
  width: 28px;
  height: 28px;
  margin-right: 6px;
  border-radius: 10px;
  justify-content: center;
  background: var(--chrome-bg);
}
.tab {
  width: 232px;
  height: 34px;
  padding: 0 10px 6px 8px;
  display: flex;
  align-items: center;
  gap: 8px;
  border-radius: 10px 10px 0 0;
  background: var(--chrome-bg);
  position: relative;
}
.tab::before, .tab::after {
  content: "";
  position: absolute;
  bottom: 0;
  width: 10px;
  height: 10px;
}
.tab::before { right: 100%; background: radial-gradient(circle at 0 0, transparent 10px, var(--chrome-bg) 10px); }
.tab::after { left: 100%; background: radial-gradient(circle at 100% 0, transparent 10px, var(--chrome-bg) 10px); }
.tab-icon { color: #1a73e8; }
.tab-title { flex: 1; white-space: nowrap; }
.tab-new { width: 28px; height: 28px; margin-left: 6px; justify-content: center; }
.win-controls { margin-left: auto; padding-top: 2px; display: flex; gap: 16px; }
.win-controls button { width: 24px; height: 24px; border-radius: 12px; justify-content: center; background: #d9d9d9; }

.toolbar {
  flex: none;
  height: 47px;
  padding: 0 6px 0 4px;
  display: flex;
  align-items: center;
  border-bottom: 1px solid #c6c6c6;
  background: var(--chrome-bg);
  color: #3d3d3d;
  font: 15px/20px var(--ui);
}
.tool { width: 36px; height: 34px; justify-content: center; }
.tool:disabled { color: #adadad; }
.omnibox {
  flex: 1;
  height: 34px;
  margin: 0 8px;
  padding: 0 6px 0 5px;
  display: flex;
  align-items: center;
  gap: 8px;
  border-radius: 17px;
  background: #fff;
}
.chip {
  height: 24px;
  padding: 0 9px 0 5px;
  display: flex;
  align-items: center;
  gap: 6px;
  border-radius: 12px;
  background: var(--chrome-bg);
  color: #111;
  font-weight: 500;
}
.url { font-size: 14px; color: #757575; }
.url b { color: #111; font-weight: 400; }
.star { margin-left: auto; }
.avatar { color: #0b57d0; }
.avatar svg { width: 20px; height: 20px; padding: 2px; border-radius: 10px; background: #d3e3fd; }
.update {
  height: 34px;
  margin-left: 4px;
  padding: 0 9px 0 15px;
  gap: 4px;
  border-radius: 17px;
  background: #e9e9e9;
  white-space: nowrap;
}

/* Settings header */
.page-head {
  flex: none;
  height: 56px;
  display: grid;
  grid-template-columns: 1fr minmax(0, 692px) 1fr;
  align-items: center;
  position: relative;
  z-index: 1;
  background: #fff;
  box-shadow: 0 1px 3px 1px rgba(0, 0, 0, .4);
}
.brand { padding-left: 21px; display: flex; align-items: center; gap: 22px; }
.brand h1 { font-size: 22px; line-height: 28px; font-weight: 500; color: #202124; }
.search {
  height: 36px;
  padding: 0 10px;
  display: flex;
  align-items: center;
  gap: 4px;
  border-radius: 18px;
  background: #ecf0fa;
  color: var(--muted);
}
.search input {
  flex: 1;
  min-width: 0;
  border: 0;
  padding: 0;
  outline: 0;
  background: none;
  font: 500 12px/20px var(--page);
  color: var(--ink);
}
.search input::placeholder { color: var(--muted); opacity: 1; }

/* Scrolled page body */
.page { flex: 1; min-height: 0; display: flex; }
.columns {
  flex: 1;
  min-width: 0;
  overflow: hidden;
  display: grid;
  grid-template-columns: minmax(250px, 1fr) minmax(0, 680px) 1fr;
  align-items: start;
}
.menu {
  width: 250px;
  padding-top: 8px;
  font-size: 14px;
  line-height: 20px;
  font-weight: 500;
  color: #202124;
}
.menu a {
  height: 40px;
  margin-right: 2px;
  padding-left: 24px;
  display: flex;
  align-items: center;
  gap: 20px;
  border-radius: 0 20px 20px 0;
}
.menu svg { color: var(--icon); }
.menu .current { background: #e8f0fe; color: #1967d2; }
.menu .current svg { color: #1a73e8; }
.menu .menu-out { margin-left: -4px; }
.menu hr { height: 1px; margin: 8px 0; border: 0; background: var(--line); }

.card {
  margin-top: -43px;
  background: #fff;
  box-shadow: 0 0 0 1px rgba(0, 0, 0, .15), 0 0 4px 1px rgba(0, 0, 0, .2);
  font-size: 13px;
  line-height: 20px;
  color: var(--ink);
}
.card h2 { padding: 32px 20px 12px; font-size: 13px; line-height: 20px; font-weight: 500; color: var(--muted); }
.row {
  height: 65px;
  padding: 0 20px;
  display: grid;
  grid-template-columns: 20px 1fr 16px;
  column-gap: 20px;
  align-items: center;
  justify-items: center;
  border-bottom: 1px solid var(--line);
}
.row svg { color: var(--icon); }
.row .go { color: var(--ink); }
.row-text { justify-self: start; }
.row-text small { display: block; font-size: 13px; color: var(--muted); }
.expander {
  width: 100%;
  height: 48px;
  padding: 0 20px;
  justify-content: space-between;
  position: relative;
}
.hovered { background: #ececec; }
.pointer { position: absolute; right: 5px; bottom: 0; width: 24px; height: 26px; }

.scrollbar { flex: none; width: 15px; display: flex; flex-direction: column; background: #f1f1f1; color: #505050; }
.scrollbar svg { width: 15px; height: 15px; }
.scroll-track { flex: 1; display: flex; flex-direction: column; padding: 0 2px; }
.scroll-track::before { content: ""; flex: 223; }
.scroll-track::after { content: ""; flex: 255; }
.scroll-thumb { flex: 402; background: #c1c1c1; }

/* Notification bubble */
.toast {
  position: absolute;
  top: 5px;
  left: 0;
  right: 0;
  z-index: 2;
  width: 500px;
  height: 76px;
  margin: 0 auto;
  padding: 13px 0 0 19px;
  display: flex;
  align-items: flex-start;
  gap: 18px;
  border: 1px solid #c4c4c4;
  border-radius: 9px;
  background: #fafafa;
  box-shadow: 0 1px 5px rgba(0, 0, 0, .2);
  color: #2b2b2b;
  font: 15px/24px var(--ui);
  white-space: nowrap;
}
.toast svg { width: 28px; height: 34px; margin-top: 3px; }
.toast-title { color: #3d3d3d; }
```
